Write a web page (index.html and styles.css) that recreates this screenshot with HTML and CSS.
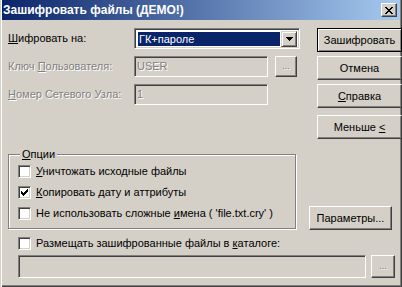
FILE: index.html
```html
<!DOCTYPE html>
<html lang="ru">
<head>
<meta charset="utf-8">
<title>Зашифровать файлы</title>
<link rel="stylesheet" href="styles.css">
</head>
<body>
<div class="window">
  <div class="titlebar">
    <span class="title">Зашифровать файлы (ДЕМО!)</span>
    <span class="close"><svg width="8" height="7" viewBox="0 0 8 7" shape-rendering="crispEdges"><path d="M0 0h2v1h-2z M6 0h2v1h-2z M1 1h2v1h-2z M5 1h2v1h-2z M2 2h4v1h-4z M3 3h2v1h-2z M2 4h4v1h-4z M1 5h2v1h-2z M5 5h2v1h-2z M0 6h2v1h-2z M6 6h2v1h-2z" fill="#000"/></svg></span>
  </div>
  <div class="content">
    <div class="top">
      <div class="form">
        <div class="row">
          <span class="lbl"><u>Ш</u>ифровать на:</span>
          <div class="combo">
            <span class="sel">ГК+пароле</span>
            <span class="drop"><svg width="7" height="4" viewBox="0 0 7 4" shape-rendering="crispEdges"><path d="M0 0h7v1h-1v1h-1v1h-1v1h-1v-1h-1v-1h-1v-1h-1z" fill="#000"/></svg></span>
          </div>
        </div>
        <div class="row">
          <span class="lbl dis">Ключ <u>П</u>ользователя:</span>
          <div class="field short dis">USER</div>
          <div class="btn mini dis"><span>...</span></div>
        </div>
        <div class="row">
          <span class="lbl dis"><u>Н</u>омер Сетевого Узла:</span>
          <div class="field short dis">1</div>
        </div>
      </div>
      <div class="buttons">
        <div class="btn default"><span>Зашифровать</span></div>
        <div class="btn"><span>Отмена</span></div>
        <div class="btn"><span><u>С</u>правка</span></div>
        <div class="btn less"><span>Меньше <u>&lt;</u></span></div>
      </div>
    </div>
    <div class="middle">
      <fieldset class="group">
        <legend><u>О</u>пции</legend>
        <div class="chk"><span class="box"></span><span><u>У</u>ничтожать исходные файлы</span></div>
        <div class="chk"><span class="box"><svg width="7" height="7" viewBox="0 0 7 7" shape-rendering="crispEdges"><path d="M0 2H1V3H2V4H3V3H4V2H5V1H6V0H7V3H6V4H5V5H4V6H3V7H2V6H1V5H0Z" fill="#000"/></svg></span><span><u>К</u>опировать дату и аттрибуты</span></div>
        <div class="chk"><span class="box"></span><span>Не использовать сложные <u>и</u>мена ( 'file.txt.cry' )</span></div>
      </fieldset>
      <div class="btn params"><span>Параметры...</span></div>
    </div>
    <div class="chk place"><span class="box"></span><span>Размещать зашифрованные файлы в <u>к</u>аталоге:</span></div>
    <div class="pathrow">
      <div class="field path"></div>
      <div class="btn mini2 dis"><span>...</span></div>
    </div>
  </div>
</div>
</body>
</html>
```
FILE: styles.css
```css
* { box-sizing: border-box; margin: 0; padding: 0; }
html, body { width: 402px; height: 287px; overflow: hidden; }
body {
  font-family: "Liberation Sans", Arial, sans-serif;
  font-size: 11px;
  line-height: 13px;
  color: #000;
  background: #D4D0C8;
}
u { text-decoration: underline; text-underline-offset: 1px; }

.window {
  width: 402px;
  height: 287px;
  background: #D4D0C8;
  box-shadow: inset 1px 0 0 #D4D0C8, inset 2px 0 0 #fff, inset -1px -1px 0 #404040, inset -2px -2px 0 #808080;
  display: flex;
  flex-direction: column;
}

.titlebar {
  margin: 0 2px;
  height: 20px;
  background: linear-gradient(to right, #0A246A, #A6CAF0);
  display: flex;
  align-items: center;
  justify-content: space-between;
  padding: 0 3px 0 1px;
}
.title { color: #fff; font-weight: bold; font-size: 12px; }
.close {
  width: 16px;
  height: 14px;
  background: #D4D0C8;
  border: 1px solid;
  border-color: #fff #404040 #404040 #fff;
  box-shadow: inset -1px -1px 0 #808080;
  display: flex;
  align-items: center;
  justify-content: center;
}

.content {
  display: flex;
  flex-direction: column;
  padding: 8px 0 0 8px;
}

.top { display: flex; }
.form { width: 301px; display: flex; flex-direction: column; gap: 7px; }
.row { display: flex; align-items: center; height: 21px; }
.lbl { width: 126px; }
.dis { color: #808080; text-shadow: 1px 1px 0 #fff; }

.combo, .field {
  height: 21px;
  border: 1px solid;
  border-color: #808080 #fff #fff #808080;
  box-shadow: inset 1px 1px 0 #404040, inset -1px -1px 0 #D4D0C8;
}
.combo {
  width: 166px;
  background: #fff;
  display: flex;
  padding: 2px 2px 1px 2px;
}
.sel {
  flex: 1;
  margin: 1px;
  background: #0A246A;
  color: #fff;
  padding-left: 1px;
  line-height: 15px;
}
.drop {
  width: 16px;
  background: #D4D0C8;
  border: 1px solid;
  border-color: #D4D0C8 #404040 #404040 #D4D0C8;
  box-shadow: inset 1px 1px 0 #fff, inset -1px -1px 0 #808080;
  display: flex;
  align-items: center;
  justify-content: center;
}

.field { background: #D4D0C8; padding: 3px 0 0 2px; }
.short { width: 134px; }

.btn {
  width: 85px;
  height: 24px;
  background: #D4D0C8;
  border: 1px solid;
  border-color: #fff #404040 #404040 #fff;
  box-shadow: inset -1px -1px 0 #808080;
  display: flex;
  align-items: center;
  justify-content: center;
}
.btn.default {
  border-color: #000;
  box-shadow: inset 1px 1px 0 #fff, inset -1px -1px 0 #808080;
}
.mini { width: 22px; height: 21px; margin-left: 7px; font-size: 9px; }

.buttons { margin-left: 8px; display: flex; flex-direction: column; gap: 4px; }
.buttons .less { margin-top: 3px; }

.middle { display: flex; align-items: flex-end; margin-top: 9px; }
.group {
  width: 288px;
  border: 1px solid #808080;
  box-shadow: inset 1px 1px 0 #fff, 1px 1px 0 #fff;
  padding: 4px 0 8px 9px;
  display: flex;
  flex-direction: column;
  gap: 8px;
}
.group legend {
  margin-left: 2px;
  padding: 0 2px;
  background: #D4D0C8;
  line-height: 13px;
}
.params { width: 83px; height: 24px; margin-left: 13px; margin-bottom: -1px; }

.chk { display: flex; align-items: center; height: 13px; gap: 5px; }
.box {
  width: 13px;
  height: 13px;
  background: #fff;
  border: 1px solid;
  border-color: #808080 #fff #fff #808080;
  box-shadow: inset 1px 1px 0 #404040, inset -1px -1px 0 #D4D0C8;
  display: flex;
  align-items: center;
  justify-content: center;
}
.place { margin: 8px 0 0 10px; }

.pathrow { display: flex; margin: 5px 0 0 10px; }
.path { width: 348px; height: 23px; }
.mini2 { width: 24px; height: 23px; margin-left: 5px; font-size: 9px; }
```
